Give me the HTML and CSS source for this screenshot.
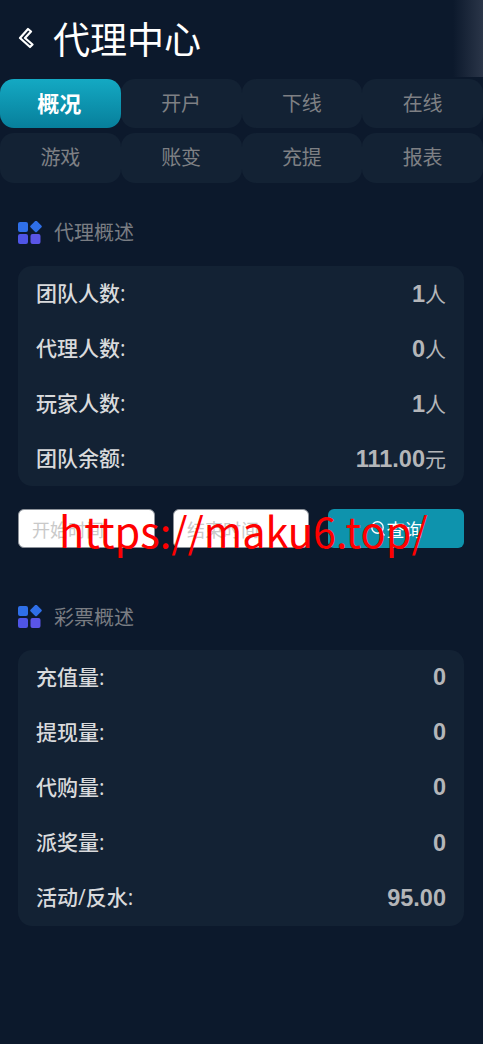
FILE: index.html
```html
<!DOCTYPE html>
<html lang="zh-CN">
<head>
<meta charset="utf-8">
<title>代理中心</title>
<link rel="stylesheet" href="styles.css">
</head>
<body>
<div class="page">
  <header class="top">
    <svg class="back" width="16" height="22" viewBox="0 0 16 22"><path d="M10 2 2 11l10 9 2.500-2.500L7 11l6-6.500z" fill="none" stroke="#fff" stroke-width="2.200" stroke-linejoin="round"/></svg>
    <h1>代理中心</h1>
    <div class="shade"></div>
  </header>
  <nav class="tabs">
    <a class="tab on">概况</a><a class="tab">开户</a><a class="tab">下线</a><a class="tab">在线</a>
    <a class="tab">游戏</a><a class="tab">账变</a><a class="tab">充提</a><a class="tab">报表</a>
  </nav>
  <section class="sec">
    <h2 class="sec-title">
      <svg width="24" height="24" viewBox="0 0 24 24"><rect x="0" y="1" width="10" height="10" rx="2" fill="#2f6fe8"/><rect x="13.500" y="1" width="9" height="9" rx="1.500" transform="rotate(45 18 5.500)" fill="#2f6fe8"/><rect x="0" y="13" width="10" height="10" rx="2" fill="#4f55e6"/><rect x="12.500" y="13" width="10" height="10" rx="2" fill="#5a55e6"/></svg>
      <span>代理概述</span>
    </h2>
    <div class="card">
      <div class="row"><span class="label">团队人数:</span><span class="value"><b>1</b>人</span></div>
      <div class="row"><span class="label">代理人数:</span><span class="value"><b>0</b>人</span></div>
      <div class="row"><span class="label">玩家人数:</span><span class="value"><b>1</b>人</span></div>
      <div class="row"><span class="label">团队余额:</span><span class="value"><b>111.00</b>元</span></div>
    </div>
  </section>
  <form class="query">
    <input class="date" placeholder="开始时间">
    <input class="date" placeholder="结束时间">
    <button type="button" class="btn">
      <svg width="16" height="17" viewBox="0 0 16 17"><circle cx="7.500" cy="7.500" r="5.700" fill="none" stroke="#fff" stroke-width="1.400"/><path d="m11.500 12 3 3.500" stroke="#fff" stroke-width="1.400"/></svg>查询
    </button>
  </form>
  <section class="sec sec2">
    <h2 class="sec-title">
      <svg width="24" height="24" viewBox="0 0 24 24"><rect x="0" y="1" width="10" height="10" rx="2" fill="#2f6fe8"/><rect x="13.500" y="1" width="9" height="9" rx="1.500" transform="rotate(45 18 5.500)" fill="#2f6fe8"/><rect x="0" y="13" width="10" height="10" rx="2" fill="#4f55e6"/><rect x="12.500" y="13" width="10" height="10" rx="2" fill="#5a55e6"/></svg>
      <span>彩票概述</span>
    </h2>
    <div class="card card-long">
      <div class="row"><span class="label">充值量:</span><span class="value"><b>0</b></span></div>
      <div class="row"><span class="label">提现量:</span><span class="value"><b>0</b></span></div>
      <div class="row"><span class="label">代购量:</span><span class="value"><b>0</b></span></div>
      <div class="row"><span class="label">派奖量:</span><span class="value"><b>0</b></span></div>
      <div class="row"><span class="label">活动/反水:</span><span class="value"><b>95.00</b></span></div>
    </div>
  </section>
  <div class="mark">https://maku6.top/</div>
</div>
</body>
</html>
```
FILE: styles.css
```css
* { box-sizing: border-box; }
html, body { margin: 0; height: 100%; }
body {
  background: #0c192c;
  font-family: "Open Sans", "Noto Sans CJK SC", sans-serif;
  overflow: hidden;
}
.page { position: relative; width: 483px; height: 1044px; }
.top {
  position: relative;
  height: 79px;
  display: flex;
  align-items: center;
  padding: 0 0 3px 18px;
}
.back { margin-right: 19px; }
.top h1 {
  margin: 0;
  font-size: 37px;
  font-weight: 400;
  color: #fff;
  font-family: "Noto Sans CJK SC", sans-serif;
  line-height: 1;
}
.shade {
  position: absolute;
  right: 0;
  top: 0;
  width: 30px;
  height: 77px;
  background: linear-gradient(90deg, rgba(40,50,70,0), #2a3548);
}
.tabs {
  display: grid;
  grid-template-columns: repeat(4, 1fr);
  grid-template-rows: 49px 50px;
  row-gap: 5px;
}
.tab {
  display: flex;
  align-items: center;
  justify-content: center;
  padding-bottom: 3px;
  background: #132234;
  border-radius: 14px;
  font-size: 20px;
  color: #7e8084;
  font-family: "Noto Sans CJK SC", sans-serif;
}
.tab.on {
  padding-right: 2px;
  background: linear-gradient(180deg, #14a9c3, #077f9b);
  color: #fff;
  font-size: 22px;
  font-weight: 700;
}
.sec { padding: 0 19px 0 18px; margin-top: 32px; }
.sec2 { margin-top: 51px; }
.sec-title {
  margin: 0 0 16px;
  height: 35px;
  display: flex;
  align-items: center;
  gap: 12px;
  padding-bottom: 2px;
  font-size: 20px;
  font-weight: 400;
  color: #7a7d83;
  font-family: "Noto Sans CJK SC", sans-serif;
}
.sec-title svg { margin-top: 2px; }
.sec2 .sec-title { padding-bottom: 0; }
.sec2 .sec-title svg { margin-top: 0; }
.card {
  background: #132234;
  border-radius: 14px;
  padding: 0 18px;
}
.row {
  height: 55px;
  display: flex;
  align-items: center;
  justify-content: space-between;
  padding-bottom: 1px;
  font-size: 21px;
  color: #d9dadc;
}
.card-long .row { height: 55.200px; }
.label { font-weight: 500; margin-bottom: 3px; }
.value { color: #b4b6b9; font-weight: 400; }
.row b { font: 700 23.500px "Liberation Sans", sans-serif; }
.query {
  display: flex;
  padding: 0 19px 0 18px;
  margin-top: 23px;
  height: 39px;
}
.date {
  width: 137px;
  height: 39px;
  margin-right: 18px;
  padding: 0 13px;
  border: 1px solid #8d929a;
  border-radius: 6px;
  background: #fff;
  font: 18px "Noto Sans CJK SC", sans-serif;
  outline: none;
}
.date + .date { width: 136px; margin-right: 19px; }
.date::placeholder { color: #c9c9c9; }
.btn {
  flex: 1;
  display: flex;
  align-items: center;
  justify-content: center;
  gap: 1px;
  border: 0;
  border-radius: 6px;
  background: #0e93ad;
  color: #fff;
  font: 18px "Noto Sans CJK SC", sans-serif;
  padding: 0;
}
.mark {
  position: absolute;
  left: 59px;
  top: 505px;
  font: 41.500px/1.250 "Noto Sans CJK SC", sans-serif;
  color: #f00;
  white-space: nowrap;
}
```
